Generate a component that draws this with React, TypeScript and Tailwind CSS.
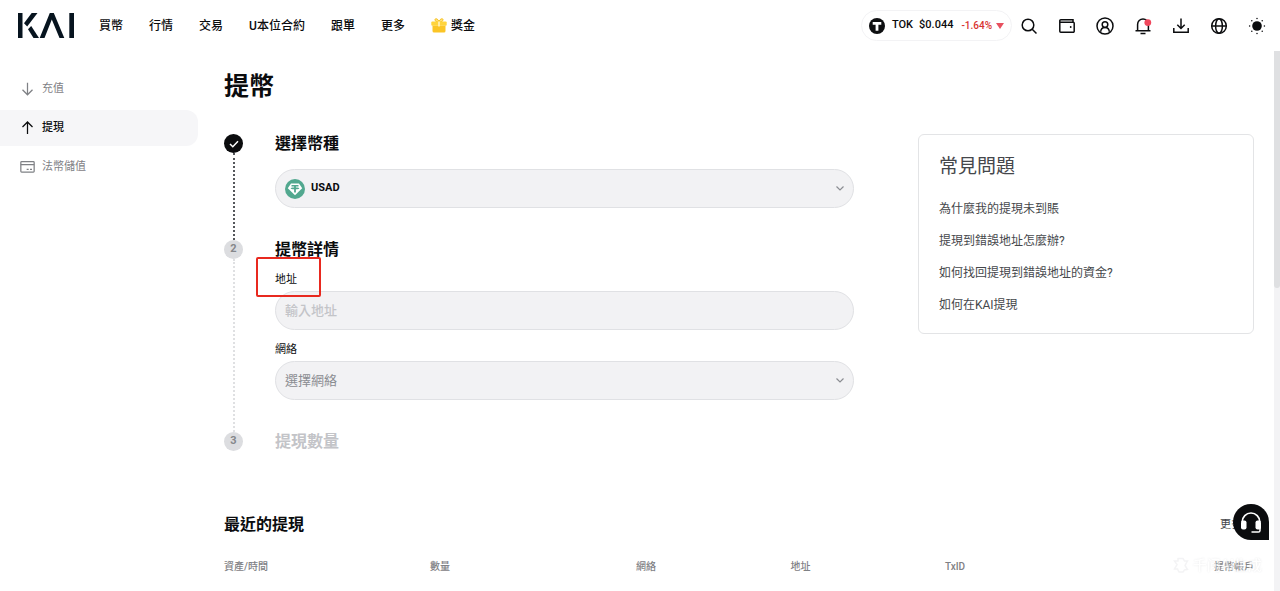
import React, { useState } from 'react';
import { clsx } from 'clsx';

const navItems = ['買幣', '行情', '交易', 'U本位合約', '跟單', '更多'];

const faqItems = [
    '為什麼我的提現未到賬',
    '提現到錯誤地址怎麼辦?',
    '如何找回提現到錯誤地址的資金?',
    '如何在KAI提現',
];

const columns = [
    { label: '資產/時間', className: 'w-[20%] text-left' },
    { label: '數量', className: 'w-[20%] text-left' },
    { label: '網絡', className: 'w-[15%] text-left' },
    { label: '地址', className: 'w-[15%] text-left' },
    { label: 'TxID', className: 'w-[15%] text-left' },
    { label: '提幣帳戶', className: 'w-[15%] text-right' },
];

interface IconProps {
    className?: string;
    children: React.ReactNode;
}

function Icon({ className, children }: IconProps) {
    return (
        <svg
            className={clsx('shrink-0', className)}
            viewBox="0 0 18 18"
            fill="none"
            stroke="currentColor"
            strokeWidth={1.5}
            aria-hidden="true"
        >
            {children}
        </svg>
    );
}

function Logo() {
    return (
        <svg className="h-[25px] w-14" viewBox="0 0 56 25" fill="#07141f" aria-hidden="true">
            <path d="M0 0h4.500v25H0z" />
            <path d="M13.700 0h5.800L9.200 13.400 6 10.200z" />
            <path d="M10 16.200l3.200-3.200L21 25h-5.500z" />
            <path d="M31.800 0h4L46.300 25h-4.800L33.800 6.500 26.500 25h-4.800z" />
            <path d="M51.300 0H56v25h-4.700z" />
        </svg>
    );
}

function GiftIcon() {
    return (
        <svg className="h-[15px] w-4 shrink-0" viewBox="0 0 16 15" aria-hidden="true">
            <path d="M7.800 4C5.500 4 3.800 3 3.900 1.700 4 .2 6.800.2 8 3.500 9.200.2 12 .2 12.100 1.700 12.200 3 10.500 4 8.200 4z" fill="#ffe07a" stroke="#f7c325" strokeWidth="1" />
            <rect x="0.300" y="3.600" width="15.400" height="4.200" rx="1" fill="#ffd43d" />
            <path d="M1.500 7.800h13V13a1.500 1.500 0 0 1-1.500 1.500H3A1.500 1.500 0 0 1 1.500 13z" fill="#fbc526" />
            <path d="M7.200 3.600h1.600v5H7.200z" fill="#fff3c4" />
        </svg>
    );
}

function TokenIcon() {
    return (
        <svg className="size-4 shrink-0" viewBox="0 0 16 16" aria-hidden="true">
            <circle cx="8" cy="8" r="8" fill="#0e0f11" />
            <path d="M3.700 4h8.600v2.700H9.400v6.100H6.600V6.700H3.700z" fill="#fff" />
        </svg>
    );
}

function UsadIcon() {
    return (
        <svg className="size-5 shrink-0" viewBox="0 0 20 20" aria-hidden="true">
            <circle cx="10" cy="10" r="10" fill="#52a88f" />
            <path d="M6 4.500h8l3.200 4.700L10 16.300 2.800 9.200z" fill="#fff" />
            <path d="M6.500 6h7v1.600h-2.600v1c2.100.1 3.400.4 3.400.8s-1.300.8-3.400.9v3.200H9.100v-3.200c-2.100-.1-3.400-.5-3.400-.9s1.300-.7 3.400-.8v-1H6.500z" fill="#52a88f" />
        </svg>
    );
}

function Chevron() {
    return (
        <svg className="pointer-events-none h-[5px] w-2 shrink-0" viewBox="0 0 8 5" fill="none" stroke="#8b8d92" strokeWidth={1.2} aria-hidden="true">
            <path d="M.5.5L4 4 7.500.5" />
        </svg>
    );
}

const actions = [
    {
        label: '搜尋',
        icon: (
            <>
                <circle cx="8" cy="8" r="5.800" />
                <path d="M12.200 12.200l4.300 4.300" />
            </>
        ),
    },
    {
        label: '錢包',
        icon: (
            <>
                <path d="M15 5.200V2.800H2.800a1 1 0 0 0-1 1v10.500a1 1 0 0 0 1 1h12.400a1 1 0 0 0 1-1V6.200a1 1 0 0 0-1-1H2" />
                <circle cx="12.700" cy="10" r="0.900" fill="currentColor" stroke="none" />
            </>
        ),
    },
    {
        label: '帳戶',
        icon: (
            <>
                <circle cx="9" cy="9" r="8" />
                <circle cx="9" cy="7.600" r="2.800" />
                <path d="M4.700 14.800c.1-2.800 1.700-4.400 4.300-4.400s4.200 1.600 4.300 4.400" />
            </>
        ),
    },
    {
        label: '通知',
        icon: (
            <>
                <path d="M3.600 13.500V7.400a5.400 5.400 0 0 1 10.800 0v6.100M1.500 13.700h15M6.500 16.600h5" />
                <circle cx="13.800" cy="5.600" r="3.400" fill="#f0475c" stroke="none" />
            </>
        ),
    },
    {
        label: '下載',
        icon: <path d="M9 1.500v9.800M5.300 7.800L9 11.500l3.700-3.700M1.800 11v4.300h14.400V11" />,
    },
    {
        label: '語言',
        icon: (
            <>
                <circle cx="9" cy="9" r="7.300" />
                <ellipse cx="9" cy="9" rx="3.400" ry="7.300" />
                <path d="M1.700 9h14.600" />
            </>
        ),
    },
    {
        label: '主題',
        icon: (
            <>
                <circle cx="9" cy="9" r="4.800" fill="currentColor" stroke="none" />
                <path
                    d="M9 1.600v.01M9 16.400v.01M1.600 9h.01M16.400 9h.01M3.800 3.800h.01M14.200 3.800h.01M3.800 14.200h.01M14.200 14.200h.01"
                    strokeLinecap="round"
                />
            </>
        ),
    },
];

function Header() {
    return (
        <header className="flex h-[51px] items-center pr-3.5 pl-[18px]">
            <a href="#" aria-label="KAI">
                <Logo />
            </a>
            <nav className="ml-[25px] flex items-center gap-[26px] text-xs font-medium whitespace-nowrap">
                {navItems.map((item) => (
                    <a key={item} href="#">
                        {item}
                    </a>
                ))}
                <a href="#" className="flex items-center gap-1">
                    <GiftIcon />
                    獎金
                </a>
            </nav>
            <div className="ml-auto flex items-center gap-2">
                <a href="#" className="flex h-[31px] items-center rounded-full border border-[#f3f3f5] px-[7px] text-[11px] font-medium whitespace-nowrap">
                    <TokenIcon />
                    <span className="ml-[7px]">TOK</span>
                    <span className="ml-1.5">$0.044</span>
                    <span className="ml-2 text-[10px] text-[#d8322f]">-1.64%</span>
                    <svg className="ml-1 h-1.5 w-2" viewBox="0 0 8 6" fill="#e8505f" aria-hidden="true">
                        <path d="M0 0h8L4 6z" />
                    </svg>
                </a>
                <div className="flex items-center gap-5">
                    {actions.map(({ label, icon }) => (
                        <button key={label} type="button" aria-label={label}>
                            <Icon className="size-[18px]">{icon}</Icon>
                        </button>
                    ))}
                </div>
            </div>
        </header>
    );
}

const sideLink = 'flex h-9 items-center gap-[7px] rounded-r-xl pl-5 text-[11px]';

function Sidebar() {
    return (
        <aside className="w-[198px] shrink-0 pt-5">
            <nav className="flex flex-col gap-[3px]">
                <a href="#" className={clsx(sideLink, 'text-[#7f8185]')}>
                    <Icon className="size-[15px]">
                        <path d="M9 1v14M3 9.300l6 6 6-6" />
                    </Icon>
                    充值
                </a>
                <a href="#" className={clsx(sideLink, 'bg-[#f6f6f8] font-medium')}>
                    <Icon className="size-[15px]">
                        <path d="M9 15.500V1.200M3 7.200l6-6 6 6" />
                    </Icon>
                    提現
                </a>
                <a href="#" className={clsx(sideLink, 'text-[#7f8185]')}>
                    <Icon className="size-[15px]">
                        <rect x="1" y="2" width="16" height="12.500" rx="1" />
                        <path d="M1 5.600h16M8 11.300h2.400M12 11.300h2.400" />
                    </Icon>
                    法幣儲值
                </a>
            </nav>
        </aside>
    );
}

interface StepProps {
    title: string;
    badge: React.ReactNode;
    state: 'done' | 'current' | 'pending';
    last?: boolean;
    children?: React.ReactNode;
}

function Step({ title, badge, state, last, children }: StepProps) {
    return (
        <li className="flex gap-8">
            <div className="flex flex-col items-center">
                <span
                    className={clsx(
                        'flex size-[19px] shrink-0 items-center justify-center rounded-full text-[11px] font-bold',
                        state === 'done' ? 'bg-[#0b0c0e] text-white' : 'bg-[#dcdde0] text-[#85878b]'
                    )}
                >
                    {badge}
                </span>
                {!last && (
                    <span
                        className={clsx(
                            'flex-1 border-l-2 border-dotted',
                            state === 'done' ? 'border-[#55575b]' : 'border-[#dfe0e2]'
                        )}
                    />
                )}
            </div>
            <div className={clsx('min-w-0 flex-1', !last && 'pb-8')}>
                <h2 className={clsx('text-base leading-5 font-bold', state === 'pending' && 'text-[#c3c4c8]')}>
                    {title}
                </h2>
                {children}
            </div>
        </li>
    );
}

const field = 'flex h-[39px] items-center rounded-full border border-[#e0e1e4] bg-[#f2f2f4] px-[9px]';

function WithdrawForm() {
    const [coin, setCoin] = useState('USAD');
    const [address, setAddress] = useState('');
    const [network, setNetwork] = useState('');

    return (
        <form className="min-w-0 flex-1">
            <ol>
                <Step
                    title="選擇幣種"
                    state="done"
                    badge={
                        <svg className="h-2 w-2.5" viewBox="0 0 10 8" fill="none" stroke="currentColor" strokeWidth={1.5} aria-hidden="true">
                            <path d="M1 4l2.800 2.700L9 1.200" />
                        </svg>
                    }
                >
                    <div className={clsx(field, 'mt-[15px] gap-1.5')}>
                        <UsadIcon />
                        <select
                            aria-label="選擇幣種"
                            value={coin}
                            onChange={(e) => setCoin(e.target.value)}
                            className="min-w-0 flex-1 appearance-none text-[11px] font-bold outline-none"
                        >
                            <option>USAD</option>
                        </select>
                        <Chevron />
                    </div>
                </Step>
                <Step title="提幣詳情" state="current" badge="2">
                    <label htmlFor="address" className="mt-3 block text-[11px] leading-4">
                        <span className="relative">
                            地址
                            <span className="pointer-events-none absolute -top-4 -left-[19px] h-10 w-[65px] rounded-xs border-2 border-[#e8291f]" />
                        </span>
                    </label>
                    <div className={clsx(field, 'mt-[3px]')}>
                        <input
                            id="address"
                            type="text"
                            value={address}
                            placeholder="輸入地址"
                            onChange={(e) => setAddress(e.target.value)}
                            className="min-w-0 flex-1 text-[13px] leading-5 outline-none placeholder:font-medium placeholder:text-[#c3c4c8]"
                        />
                    </div>
                    <label htmlFor="network" className="mt-3 block text-[11px] leading-4">
                        網絡
                    </label>
                    <div className={clsx(field, 'mt-[3px]')}>
                        <select
                            id="network"
                            value={network}
                            onChange={(e) => setNetwork(e.target.value)}
                            className="min-w-0 flex-1 appearance-none text-[13px] leading-5 text-[#8b8d92] outline-none"
                        >
                            <option value="">選擇網絡</option>
                        </select>
                        <Chevron />
                    </div>
                </Step>
                <Step title="提現數量" state="pending" badge="3" last />
            </ol>
        </form>
    );
}

function Faq() {
    return (
        <section className="w-[336px] shrink-0 rounded-md border border-[#e3e4e6] px-5 pt-4 pb-[18px] text-[#45474b]">
            <h2 className="text-[19px] leading-8">常見問題</h2>
            <ul className="mt-4 flex flex-col gap-3 text-xs leading-5">
                {faqItems.map((item) => (
                    <li key={item}>
                        <a href="#">{item}</a>
                    </li>
                ))}
            </ul>
        </section>
    );
}

function RecentWithdrawals() {
    return (
        <section className="mt-[61px]">
            <div className="flex items-center justify-between">
                <h2 className="text-base leading-6 font-bold">最近的提現</h2>
                <a href="#" className="mr-3 text-[11px] text-[#45474b]">
                    更多
                </a>
            </div>
            <table className="mt-5 w-full table-fixed text-[10px] leading-5 text-[#7f8185]">
                <thead>
                    <tr>
                        {columns.map(({ label, className }) => (
                            <th key={label} scope="col" className={clsx('font-medium whitespace-nowrap', className)}>
                                {label}
                            </th>
                        ))}
                    </tr>
                </thead>
            </table>
        </section>
    );
}

function SupportButton() {
    return (
        <button
            type="button"
            aria-label="客服"
            className="fixed right-[11px] bottom-[51px] flex size-9 items-center justify-center rounded-full rounded-br-none bg-[#0b0c0e]"
        >
            <svg className="size-6" viewBox="0 0 24 24" fill="none" aria-hidden="true">
                <path d="M3.200 12a8.800 9 0 0 1 17.600 0" stroke="#fff" strokeWidth="1.700" />
                <rect x="2" y="10.500" width="5.500" height="9" rx="2" fill="#fff" />
                <rect x="16.500" y="10.500" width="5.500" height="9" rx="2" fill="#fff" />
                <path d="M21 17v3.500c0 1-.5 1.600-1.600 1.600h-6.900" stroke="#fff" strokeWidth="1.500" />
            </svg>
        </button>
    );
}

function Watermark() {
    return (
        <div className="pointer-events-none fixed right-[18px] bottom-4 flex items-center gap-1 text-sm font-medium text-white opacity-60 [text-shadow:0_0_2px_#d4d5d8]">
            <svg className="size-4" viewBox="0 0 16 16" fill="none" stroke="#ececee" strokeWidth={1.5} aria-hidden="true">
                <path d="M5 1.500h5l1.500 2.500h3L12 8.500l2.500 4-3 .5-1.500 2H6l-1.500-3h-3L4 7.500 1.500 4H5z" />
            </svg>
            千问AI生成
        </div>
    );
}

export default function App() {
    return (
        <div className="flex min-h-screen flex-col bg-white font-[Roboto,'Noto_Sans_CJK_TC',sans-serif] text-[#0b0c0e]">
            <Header />
            <div className="flex flex-1">
                <Sidebar />
                <main className="min-w-0 flex-1 pt-[18px] pr-5 pl-[26px]">
                    <h1 className="text-[25px] leading-9 font-bold">提幣</h1>
                    <div className="mt-[29px] flex items-start gap-16">
                        <WithdrawForm />
                        <Faq />
                    </div>
                    <RecentWithdrawals />
                </main>
                <div className="w-1.5 shrink-0 bg-[#f3f3f5]" aria-hidden="true">
                    <div className="h-[237px] rounded-b-full bg-[#dfe0e2]" />
                </div>
            </div>
            <SupportButton />
            <Watermark />
        </div>
    );
}
